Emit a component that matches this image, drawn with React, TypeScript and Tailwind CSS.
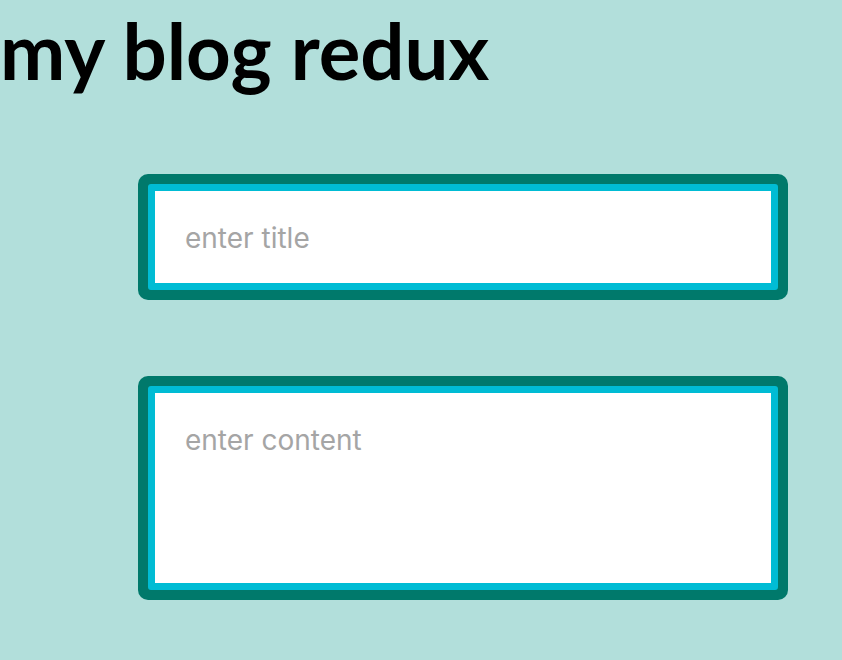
export default function App() {
  return (
    <div className="min-h-[660px] bg-[#b2dfdb]">
      <h1 className="m-0 pt-[2px] font-['Lato',sans-serif] text-[78px] font-bold leading-[96px] text-black">
        my blog redux
      </h1>
      <form className="flex flex-col gap-[76px] pl-[138px] pt-[76px]">
        <div className="w-[650px] rounded-[10px] bg-[#00796b] p-[10px]">
          <input
            type="text"
            placeholder="enter title"
            className="block h-[106px] w-full rounded-[3px] border-[7px] border-[#00bcd4] bg-white px-[30px] pt-[2px] font-['Inter',sans-serif] text-[28px] text-gray-700 outline-none placeholder:text-[#a5a5a5]"
          />
        </div>
        <div className="w-[650px] rounded-[10px] bg-[#00796b] p-[10px]">
          <textarea
            placeholder="enter content"
            className="block h-[204px] w-full resize-none rounded-[3px] border-[7px] border-[#00bcd4] bg-white px-[30px] pt-[26px] font-['Inter',sans-serif] text-[28px] leading-normal text-gray-700 outline-none placeholder:text-[#a5a5a5]"
          />
        </div>
      </form>
    </div>
  );
}
